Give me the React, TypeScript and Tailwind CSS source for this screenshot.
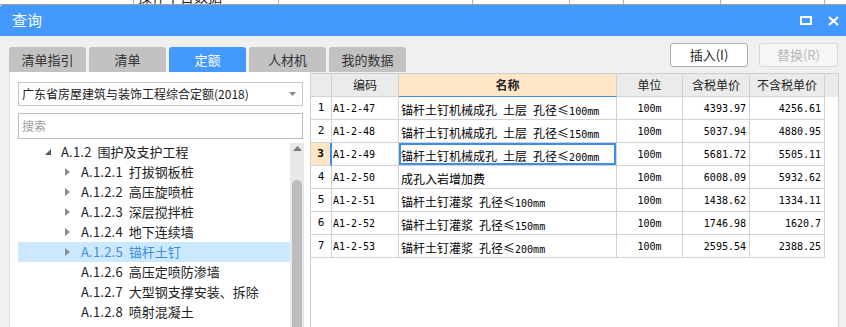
import React from "react";

const rows = [
  ["1", "A1-2-47", "锚杆土钉机械成孔 土层 孔径≤100mm", "100m", "4393.97", "4256.61"],
  ["2", "A1-2-48", "锚杆土钉机械成孔 土层 孔径≤150mm", "100m", "5037.94", "4880.95"],
  ["3", "A1-2-49", "锚杆土钉机械成孔 土层 孔径≤200mm", "100m", "5681.72", "5505.11"],
  ["4", "A1-2-50", "成孔入岩增加费", "100m", "6008.09", "5932.62"],
  ["5", "A1-2-51", "锚杆土钉灌浆 孔径≤100mm", "100m", "1438.62", "1334.11"],
  ["6", "A1-2-52", "锚杆土钉灌浆 孔径≤150mm", "100m", "1746.98", "1620.7"],
  ["7", "A1-2-53", "锚杆土钉灌浆 孔径≤200mm", "100m", "2595.54", "2388.25"],
];

const tree = [
  { code: "A.1.2", name: "围护及支护工程", level: 1, arrow: "open" },
  { code: "A.1.2.1", name: "打拔钢板桩", level: 2, arrow: "closed" },
  { code: "A.1.2.2", name: "高压旋喷桩", level: 2, arrow: "closed" },
  { code: "A.1.2.3", name: "深层搅拌桩", level: 2, arrow: "closed" },
  { code: "A.1.2.4", name: "地下连续墙", level: 2, arrow: "closed" },
  { code: "A.1.2.5", name: "锚杆土钉", level: 2, arrow: "closed", selected: true },
  { code: "A.1.2.6", name: "高压定喷防渗墙", level: 2 },
  { code: "A.1.2.7", name: "大型钢支撑安装、拆除", level: 2 },
  { code: "A.1.2.8", name: "喷射混凝土", level: 2 },
];

const tabs = ["清单指引", "清单", "定额", "人材机", "我的数据"];

// ascii runs in a narrow mono face, the rest in the CJK face
function Mixed({ text }: { text: string }) {
  const parts = text.split(/([\x20-\x7e]+)/).filter((p) => p !== "");
  return (
    <span className="whitespace-pre">
      {parts.map((p, i) =>
        /^[\x20-\x7e]+$/.test(p) ? (
          <span key={i} className="font-['DejaVu_Sans_Mono',monospace] text-[10px]">
            {p}
          </span>
        ) : (
          <span key={i} className="text-[12px]">
            {p}
          </span>
        )
      )}
    </span>
  );
}

function Arrow({ kind }: { kind?: string }) {
  if (kind === "open")
    return (
      <svg width="6" height="6" viewBox="0 0 6 6">
        <polygon points="6,0 6,6 0,6" fill="#5a5a5a" />
      </svg>
    );
  if (kind === "closed")
    return (
      <svg width="5" height="8" viewBox="0 0 5 8">
        <polygon points="0,0 5,4 0,8" fill="#8c8c8c" />
      </svg>
    );
  return null;
}

export default function App() {
  return (
    <div className="w-[846px] h-[327px] overflow-hidden bg-[#f0f0f0] font-['Noto_Sans_CJK_SC',sans-serif] text-[#222] flex flex-col">
      {/* strip of the window behind */}
      <div className="h-[5px] shrink-0 bg-white border-b border-[#9e9e9e] flex overflow-hidden">
        <div className="w-[134px] border-r border-[#b0b0b0]" />
        <div className="w-[145px] border-r border-[#b0b0b0] pl-[4px] text-[14px] leading-[14px] -mt-[11px]">操作平台数据</div>
        <div className="w-[194px] border-r border-[#b0b0b0]" />
        <div className="w-[97px] border-r border-[#b0b0b0]" />
        <div className="w-[54px] border-r border-[#b0b0b0]" />
        <div className="w-[97px] border-r border-[#b0b0b0]" />
        <div className="w-[104px] border-r border-[#b0b0b0]" />
      </div>

      {/* title bar */}
      <div className="h-[31px] shrink-0 bg-[#4499ff] rounded-tl-[3px] flex items-center justify-between pl-[12px] pr-[7px]">
        <span className="text-white text-[15px]">查询</span>
        <div className="flex items-center gap-[16px]">
          <svg width="12" height="9" viewBox="0 0 12 9">
            <rect x="1" y="1" width="10" height="7" fill="none" stroke="white" strokeWidth="2" />
          </svg>
          <svg width="11" height="10" viewBox="0 0 11 10">
            <path d="M1 1 L10 9 M10 1 L1 9" stroke="white" strokeWidth="2.2" />
          </svg>
        </div>
      </div>

      {/* tabs + buttons */}
      <div className="h-[36px] shrink-0 flex justify-between pl-[9px] pr-[8px] pt-[7px]">
        <div className="flex gap-[3px] mt-[4px]">
          {tabs.map((t) => (
            <div
              key={t}
              className={
                t === "定额"
                  ? "w-[77px] h-[25px] rounded-t-[3px] bg-[#4499ff] text-white text-[13px] flex items-center justify-center"
                  : "w-[77px] h-[25px] rounded-t-[3px] bg-[#c2c2c2] text-[#333] text-[13px] flex items-center justify-center"
              }
            >
              {t}
            </div>
          ))}
        </div>
        <div className="flex gap-[11px]">
          <button className="w-[78px] h-[24px] bg-white border border-[#adadad] rounded-[3px] text-[13px] text-[#222]">
            插入(I)
          </button>
          <button className="w-[79px] h-[24px] bg-[#f6f6f6] border border-[#d8d8d8] rounded-[3px] text-[13px] text-[#b8b8b8]">
            替换(R)
          </button>
        </div>
      </div>

      <div className="flex flex-1 min-h-0">
        {/* left panel */}
        <div className="ml-[9px] w-[301px] bg-white border-l border-[#e2e2e2] flex flex-col pt-[10px]">
          <div className="ml-[8px] w-[285px] h-[24px] border border-[#c6c6c6] flex items-center justify-between pl-[3px] pr-[6px]">
            <span className="text-[12px] text-[#222]">广东省房屋建筑与装饰工程综合定额(2018)</span>
            <svg width="7" height="4" viewBox="0 0 7 4">
              <polygon points="0,0 7,0 3.5,4" fill="#8a8a8a" />
            </svg>
          </div>
          <div className="ml-[8px] mt-[7px] w-[285px] h-[26px] border border-[#bdbdbd] flex items-center pl-[3px]">
            <span className="text-[12px] text-[#a0a0a0]">搜索</span>
          </div>
          <div className="flex flex-1 ml-[8px] mr-[6px] mt-[3px]">
            <div className="flex-1">
              {tree.map((n) => (
                <div
                  key={n.code}
                  className={
                    "h-[20px] flex items-center " +
                    (n.level === 1 ? "pl-[27px] " : "pl-[47px] ") +
                    (n.selected ? "bg-[#cce8ff] text-[#3a8ee6]" : "text-[#222]")
                  }
                >
                  <span className="w-[16px] flex items-center">
                    <Arrow kind={n.arrow} />
                  </span>
                  <span className="text-[13px] tracking-[0.2px]">{n.code}</span>
                  <span className="text-[13px] ml-[6px]">{n.name}</span>
                </div>
              ))}
            </div>
            <div className="w-[14px] mt-[1px] bg-[#e8e8e8] flex flex-col items-center">
              <svg className="mt-[3px]" width="9" height="5" viewBox="0 0 9 5">
                <polygon points="4.5,0 9,5 0,5" fill="#7a7a7a" />
              </svg>
              <div className="mt-[29px] w-[10px] flex-1 bg-[#bcbcbc] rounded-t-full" />
            </div>
          </div>
        </div>

        {/* result grid */}
        <div className="mt-[1px] w-[529px] bg-white border-l border-t border-r border-[#cfcfcf]">
          <div className="flex h-[23px] bg-[#ebebeb] text-[12px] text-[#222]">
            <div className="w-[21px] border-r border-b border-[#d2d2d2]" />
            <div className="w-[67px] border-r border-b border-[#d2d2d2] flex items-center justify-center">编码</div>
            <div className="w-[218px] border-r border-b border-r-[#d2d2d2] border-b-[#3b8eea] bg-[#ffe6c6] font-bold flex items-center justify-center">
              名称
            </div>
            <div className="w-[66px] border-r border-b border-[#d2d2d2] flex items-center justify-center">单位</div>
            <div className="w-[67px] border-r border-b border-[#d2d2d2] flex items-center justify-center">含税单价</div>
            <div className="w-[75px] border-r border-b border-[#d2d2d2] flex items-center justify-center">不含税单价</div>
          </div>
          {rows.map((r) => {
            const sel = r[0] === "3";
            return (
              <div key={r[0]} className="flex h-[23px] text-black">
                <div
                  className={
                    sel
                      ? "w-[21px] border-r-2 border-b border-r-[#3b8eea] border-b-[#d2d2d2] bg-[#ffe6c6] font-bold flex items-center justify-center font-['DejaVu_Sans_Mono',monospace] text-[11px]"
                      : "w-[21px] border-r border-b border-[#d2d2d2] flex items-center justify-center font-['DejaVu_Sans_Mono',monospace] text-[11px]"
                  }
                >
                  {r[0]}
                </div>
                <div className="w-[67px] border-r border-b border-[#d2d2d2] flex items-center pl-[1px] font-['DejaVu_Sans_Mono',monospace] text-[10px]">
                  {r[1]}
                </div>
                <div
                  className={
                    "w-[218px] border-r border-b border-[#d2d2d2] flex items-center pl-[2px] " +
                    (sel ? "shadow-[inset_0_0_0_2px_#3b8eea]" : "")
                  }
                >
                  <Mixed text={r[2]} />
                </div>
                <div className="w-[66px] border-r border-b border-[#d2d2d2] flex items-center justify-center font-['DejaVu_Sans_Mono',monospace] text-[10px]">
                  {r[3]}
                </div>
                <div className="w-[67px] border-r border-b border-[#d2d2d2] flex items-center justify-end pr-[3px] font-['DejaVu_Sans_Mono',monospace] text-[10px]">
                  {r[4]}
                </div>
                <div className="w-[75px] border-r border-b border-[#d2d2d2] flex items-center justify-end pr-[3px] font-['DejaVu_Sans_Mono',monospace] text-[10px]">
                  {r[5]}
                </div>
              </div>
            );
          })}
        </div>
      </div>
    </div>
  );
}
